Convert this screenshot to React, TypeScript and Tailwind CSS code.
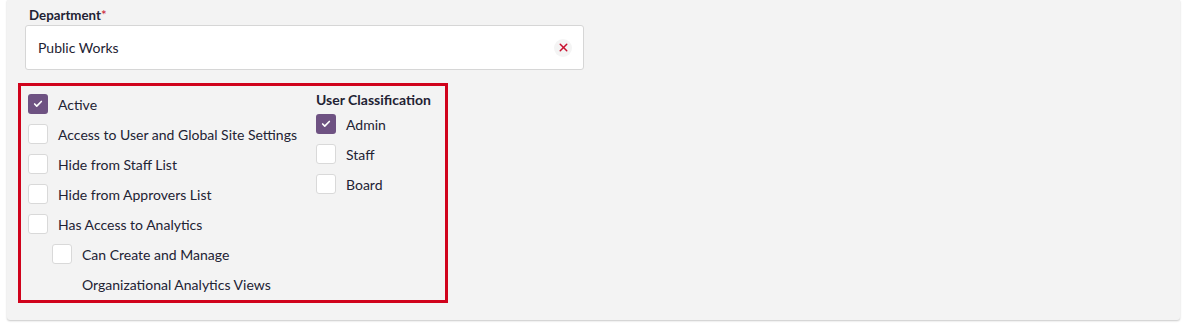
import { Check, X } from "lucide-react"

const font = { fontFamily: "Lato, 'Liberation Sans', sans-serif" }

const Box = ({ checked }: { checked?: boolean }) =>
  checked ? (
    <span className="flex h-[20px] w-[20px] shrink-0 items-center justify-center rounded-[3px] bg-[#6e5282]">
      <Check className="h-[10px] w-[10px] text-white" strokeWidth={4} />
    </span>
  ) : (
    <span className="h-[20px] w-[20px] shrink-0 rounded-[3px] border border-[#d9d9d9] bg-white" />
  )

const Row = ({ label, checked, indent }: { label: string; checked?: boolean; indent?: boolean }) => (
  <div className={`flex h-[30px] items-center gap-[10px] ${indent ? "pl-[31px]" : "pl-[7px]"}`}>
    <Box checked={checked} />
    <span>{label}</span>
  </div>
)

const App = () => {
  return (
    <div className="min-h-screen bg-white text-[14px] text-[#222233]" style={font}>
      <div className="ml-[7px] w-[1173px] rounded-b-[3px] bg-[#f3f3f3] pb-[17px] pl-[11px] pt-[6px] shadow-[0_1px_2px_rgba(0,0,0,0.22)]">
        <div className="pl-[7px]">
          <div className="ml-1 text-[13.3px] font-bold leading-[18px]">
            Department<span className="font-normal text-[#c8102e]">*</span>
          </div>
          <div className="mt-[1px] flex h-[45px] w-[559px] items-center justify-between rounded-[3px] border border-[#d6d6d6] bg-white pl-[12px] pr-[11px]">
            <span>Public Works</span>
            <span className="flex h-[18px] w-[18px] items-center justify-center rounded-full bg-[#f4f4f4]">
              <X className="h-[13px] w-[13px] text-[#c8102e]" strokeWidth={2.75} />
            </span>
          </div>
        </div>
        <div className="mt-[13px] flex h-[220px] w-[430px] border-[3px] border-[#d0021b] pt-[3px]">
          <div className="w-[295px]">
            <Row label="Active" checked />
            <Row label="Access to User and Global Site Settings" />
            <Row label="Hide from Staff List" />
            <Row label="Hide from Approvers List" />
            <Row label="Has Access to Analytics" />
            <Row label="Can Create and Manage" indent />
            <div className="flex h-[30px] items-center pl-[61px]">Organizational Analytics Views</div>
          </div>
          <div className="pt-[2px]">
            <div className="text-[14px] font-bold leading-[18px]">User Classification</div>
            <div className="[&>div]:pl-0">
              <Row label="Admin" checked />
              <Row label="Staff" />
              <Row label="Board" />
            </div>
          </div>
        </div>
      </div>
    </div>
  )
}

export default App
